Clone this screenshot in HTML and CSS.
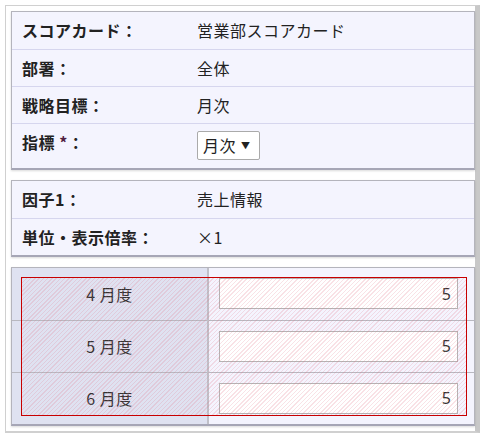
FILE: index.html
```html
<!DOCTYPE html>
<html lang="ja">
  <head>
    <meta charset="utf-8" />
    <title>スコアカード</title>
    <link rel="stylesheet" href="styles.css">
  </head>
  <body>
    <div class="frame">
      <div class="panel">
        <table class="info">
          <tr><th>スコアカード：</th><td>営業部スコアカード</td></tr>
          <tr><th>部署：</th><td>全体</td></tr>
          <tr><th>戦略目標：</th><td>月次</td></tr>
          <tr class="top">
            <th>指標 <span class="req">*</span>：</th>
            <td><span class="select">月次 <span class="caret">▼</span></span></td>
          </tr>
        </table>
      </div>

      <div class="panel">
        <table class="info">
          <tr><th>因子1：</th><td>売上情報</td></tr>
          <tr><th>単位・表示倍率：</th><td>×1</td></tr>
        </table>
      </div>

      <div class="panel grid_panel">
        <table class="grid">
          <tr><th>4 月度</th><td><input type="text" value="5" /></td></tr>
          <tr><th>5 月度</th><td><input type="text" value="5" /></td></tr>
          <tr><th>6 月度</th><td><input type="text" value="5" /></td></tr>
        </table>
        <div class="mark"></div>
      </div>
    </div>
  </body>
</html>
```

FILE: styles.css
```css
* {
  margin: 0;
  padding: 0;
  box-sizing: border-box;
}
body {
  background: #fff;
  font-family: "Noto Sans CJK JP", "Noto Sans", sans-serif;
  font-size: 16px;
  color: #222;
}
.frame {
  margin: 5px 0 0 5px;
  padding: 5px 0 5px 5px;
  border: 1px solid #d0d0d0;
  border-right: 5px solid #c8c8c8;
  border-bottom: 2px solid #d0d0d0;
  display: flex;
  flex-direction: column;
  gap: 10px;
}
.panel {
  background: #f4f4fe;
  border: 1px solid #b4b4bc;
  border-bottom: 2px solid #a6a6b6;
  box-shadow: 0 1px 2px rgba(0,0,0,0.15);
}
.info {
  width: 100%;
  border-collapse: collapse;
}
.info tr + tr {
  border-top: 1px solid #d6d6ee;
}
.info th {
  width: 185px;
  text-align: left;
  font-weight: bold;
  padding: 0 0 0 10px;
  height: 37px;
  letter-spacing: 0.5px;
}
.info td {
  letter-spacing: 0.5px;
}
.info tr.top th {
  vertical-align: top;
  padding-top: 6px;
  height: 45px;
}
.req {
  color: #502040;
}
.select {
  display: inline-block;
  background: #fff;
  border: 1px solid #aaa;
  border-radius: 2px;
  padding: 1px 8px 1px 5px;
  line-height: 25px;
}
.caret {
  font-size: 9px;
  vertical-align: 3px;
  margin-left: 1px;
}

.grid_panel {
  position: relative;
}
.grid {
  width: 100%;
  border-collapse: collapse;
}
.grid tr + tr {
  border-top: 1px solid #b8b8c0;
}
.grid th {
  width: 196px;
  height: 52px;
  background: #dfe2f1;
  border-right: 2px solid #c0c0c8;
  font-weight: normal;
  color: #333;
  letter-spacing: 0.5px;
}
.grid td {
  padding: 0 16px 0 10px;
}
.grid input {
  width: 100%;
  height: 31px;
  border: 1px solid #b4b4b4;
  background: #fff;
  text-align: right;
  padding-right: 6px;
  font-family: "Noto Sans", sans-serif;
  font-size: 16px;
  color: #333;
}
.mark {
  position: absolute;
  top: 9px;
  left: 9px;
  right: 7px;
  bottom: 8px;
  border: 1px solid #c80000;
  background: repeating-linear-gradient(135deg, rgba(225,110,130,0.2) 0 1px, transparent 1px 3px);
}
```
